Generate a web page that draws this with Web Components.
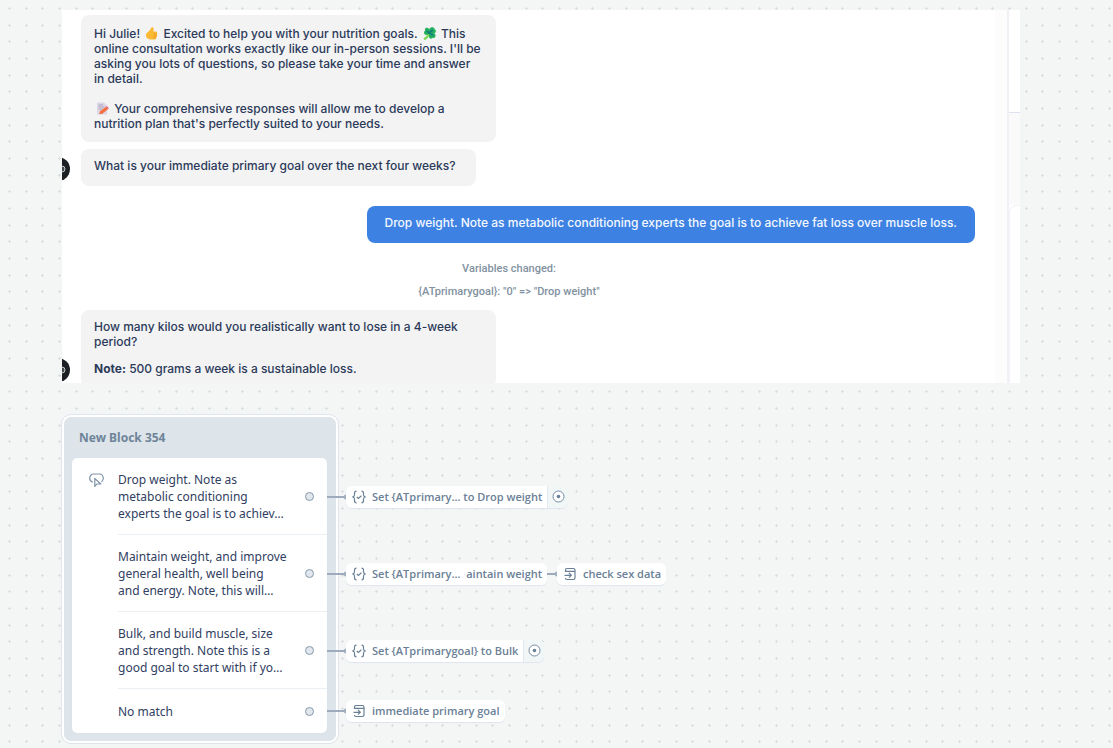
<!DOCTYPE html>
<html lang="en">
<head>
<meta charset="utf-8">
<title>Conversation canvas</title>
<style>
  body { margin: 0; min-height: 100vh; }
</style>
</head>
<body>
<flow-canvas>
  <chat-panel>
    <chat-message>
      <p>Hi Julie! <chat-emoji name="thumb"></chat-emoji> Excited to help you with your nutrition goals. <chat-emoji name="clover"></chat-emoji> This<br>online consultation works exactly like our in-person sessions. I'll be<br>asking you lots of questions, so please take your time and answer<br>in detail.</p>
      <p class="next"><chat-emoji name="memo"></chat-emoji> Your comprehensive responses will allow me to develop a<br>nutrition plan that's perfectly suited to your needs.</p>
    </chat-message>
    <chat-message avatar compact>
      <p>What is your immediate primary goal over the next four weeks?</p>
    </chat-message>
    <chat-message reply compact>
      <p>Drop weight. Note as metabolic conditioning experts the goal is to achieve fat loss over muscle loss.</p>
    </chat-message>
    <chat-log>
      <span>Variables changed:</span>
      <span>{ATprimarygoal}: "0" =&gt; "Drop weight"</span>
    </chat-log>
    <chat-message avatar wide>
      <p>How many kilos would you realistically want to lose in a 4-week<br>period?</p>
      <p class="note"><b>Note:</b> 500 grams a week is a sustainable loss.</p>
    </chat-message>
  </chat-panel>

  <flow-group>
    <flow-block slot="block" name="New Block 354">
      <flow-option icon>Drop weight. Note as<br>metabolic conditioning<br>experts the goal is to achiev…</flow-option>
      <flow-option>Maintain weight, and improve<br>general health, well being<br>and energy. Note, this will…</flow-option>
      <flow-option>Bulk, and build muscle, size<br>and strength. Note this is a<br>good goal to start with if yo…</flow-option>
      <flow-option short>No match</flow-option>
    </flow-block>
    <flow-path><flow-chip icon="set" target>Set {ATprimary… to Drop weight</flow-chip></flow-path>
    <flow-path><flow-chip icon="set">Set {ATprimary…&nbsp; aintain weight</flow-chip><flow-chip icon="jump" linked>check sex data</flow-chip></flow-path>
    <flow-path><flow-chip icon="set" target>Set {ATprimarygoal} to Bulk</flow-chip></flow-path>
    <flow-path short><flow-chip icon="jump">immediate primary goal</flow-chip></flow-path>
  </flow-group>
</flow-canvas>

<script>
const define = (name, html, setup) => {
  const template = document.createElement('template');
  template.innerHTML = html;
  customElements.define(name, class extends HTMLElement {
    constructor() {
      super();
      this.attachShadow({ mode: 'open' }).append(template.content.cloneNode(true));
    }
    connectedCallback() { if (setup) setup(this, this.shadowRoot); }
  });
};

/* Canvas: the grid marks repeat three times in each 50px tile. */
const mark = (x, y) => `M${x - 1.5} ${y}h3M${x} ${y - 1.5}v3`;
const marks = [9.5, 26.5, 42.5].flatMap(x => [8.5, 25.5, 41.5].map(y => mark(x, y))).join('');
const tile = encodeURIComponent(`<svg xmlns="http://www.w3.org/2000/svg" width="50" height="50"><path d="${marks}" stroke="#dae0e0" fill="none"/></svg>`);

define('flow-canvas', `
<style>
  :host {
    display: flex; flex-direction: column; gap: 32px;
    box-sizing: border-box; min-height: 100vh; padding: 10px 93px 4px 62px;
    overflow: hidden;
    background: #f4f6f6 url("data:image/svg+xml,${tile}");
    font-family: "Open Sans", sans-serif;
  }
</style>
<slot></slot>`);

define('chat-panel', `
<style>
  :host {
    display: grid; grid-template-columns: 1fr 12px 2px 11px;
    max-height: 373px; overflow: hidden; background: #fff;
    font: 500 12px/15px Inter, sans-serif; color: #2b3a5a;
  }
  .thread { display: flex; flex-direction: column; align-items: flex-start; min-width: 0; padding: 5px 20px 0 0; }
  .track { background: #fcfcfd; }
  .rule { background: #f0f0f6; }
  .side { display: grid; grid-template-rows: 102px 1px 92px 1fr; }
  .line { background: #dfe2f0; }
  .band { background: #fafafb; }
  .sheet { border: solid #f3f3f6; border-width: 1px 0 0 1px; border-top-left-radius: 8px; }
</style>
<div class="thread"><slot></slot></div>
<div class="track"></div>
<div class="rule"></div>
<div class="side"><div></div><div class="line"></div><div class="band"></div><div class="sheet"></div></div>`);

define('chat-message', `
<style>
  :host { display: flex; align-items: flex-end; gap: 11px; margin-bottom: 7px; }
  svg { width: 8px; height: 24px; margin-bottom: 5px; flex: none; visibility: hidden; }
  :host([avatar]) svg { visibility: visible; }
  .bubble { box-sizing: border-box; padding: 11px 13px; border-radius: 8px; background: #f3f3f3; white-space: nowrap; }
  :host(:not([compact])) .bubble { width: 415px; }
  :host([wide]) .bubble { padding-top: 9px; }
  :host([compact]) .bubble { padding: 9px 20px 13px 13px; }
  :host([reply]) { align-self: flex-end; margin: 13px 0 14px; color: #f4f8ff; }
  :host([reply]) svg { display: none; }
  :host([reply]) .bubble { padding: 9px 18px 13px; background: #3d82e3; }
  ::slotted(p) { margin: 0; }
  ::slotted(p.next) { margin-top: 15px; }
  ::slotted(p.note) { margin-top: 12px; }
</style>
<svg viewBox="0 0 8 24" aria-hidden="true">
  <circle cx="-4" cy="12" r="12" fill="#1c2025"/>
  <circle cx="0" cy="12" r="3" fill="#45484c" stroke="#c9cbcd"/>
</svg>
<div class="bubble"><slot></slot></div>`);

define('chat-log', `
<style>
  :host { display: flex; flex-direction: column; align-items: center; align-self: stretch;
    margin: 0 19px 7px 0; font: 500 11px/23px Roboto, sans-serif; color: #8292a0; }
</style>
<slot></slot>`);

const emoji = {
  thumb: `<path d="M6.600 .300c1.200-.5 2.300.4 2.100 1.800L8.300 4.600h2.500c1.300 0 1.700 1.400 1 2 .8.5.7 1.600 0 2 .5.600.1 1.600-.5 1.900.2 1-.4 1.800-1.400 1.900-2.100.3-4.700.2-6.300-.5C2 11.400.9 10 1 8.200c0-1.700.9-2.700 2.200-3.500C4.800 3.700 5.600 2.200 6.600.3z" fill="#fbb832"/><path d="M8.500 6.700h2.900M8.400 8.700h3M8.200 10.600h2.500" stroke="#e8912a" stroke-width=".7" fill="none"/>`,
  clover: `<path d="M6 6.500C5 9.500 3.500 11.300 1 12.200" stroke="#7ed957" stroke-width="2.200" fill="none"/><path d="M6.500 6.800C3 9 .8 7.500 1 5.300 1.100 4.300 1.700 3.800 2.200 3.700 1.200 1.500 3 .2 4.800 1.100 5.500 1.400 6 1.700 6.300 2.200 7 .6 8.800 0 10.300.5c1.200.4 1.500 1.300 1.400 2 1.200.4 1.500 1.600.8 2.700-.3.6-.8 1-1.200 1.300 1.500.9 1.600 2.700.7 3.700-.7.8-1.700.8-2.300.5-.8 1.400-2.600 1.300-3.400.1C5.600 9.600 6 7.800 6.500 6.800z" fill="#25b060"/><path d="M3.500 4l6.500 4.500M9.800 3L5 6.500" stroke="#11807a" stroke-width="1.600" fill="none"/>`,
  memo: `<path d="M1 .5h7L11 3.300V12.500H1z" fill="#dcd6e6"/><path d="M2.500 3h4.500M2.500 5h6M2.500 7h4" stroke="#a79bb8" stroke-width=".8"/><path d="M4 9.300L10 4.700l2 2.600-5.700 4.500-3 .5z" fill="#f4703f"/><path d="M10 4.700l1-.7 1.900 2.300-.9 1z" fill="#ef5d74"/>`
};
define('chat-emoji', `
<style>
  :host { display: inline-block; width: 13px; height: 13px; margin: 0 2px; vertical-align: -2px; }
  svg { display: block; width: 13px; height: 13px; }
</style>
<svg viewBox="0 0 13 13" aria-hidden="true"></svg>`,
(host, root) => { root.querySelector('svg').innerHTML = emoji[host.getAttribute('name')]; });

/* The block on the left; one outgoing path beside each option. */
define('flow-group', `
<style>
  :host { display: flex; align-items: flex-start; }
  .paths { display: flex; flex-direction: column; margin-left: -11px; padding-top: 43px; z-index: 1; }
</style>
<slot name="block"></slot>
<div class="paths"><slot></slot></div>`);

define('flow-block', `
<style>
  :host { display: block; flex: none; box-sizing: border-box; width: 276px; padding: 0 9px 8px 8px;
    border: 2px solid #fff; border-radius: 9px; background: #dde4ea; outline: 1px solid #dfe5ec; }
  h2 { margin: 0; padding: 12px 7px 11px; font: 700 12px/18px "Noto Sans", sans-serif; color: #6e8499; }
  .list { border-radius: 5px; background: #fff; box-shadow: 0 0 1px #c9d3dd; }
</style>
<h2></h2>
<div class="list"><slot></slot></div>`,
(host, root) => { root.querySelector('h2').textContent = host.getAttribute('name'); });

define('flow-option', `
<style>
  :host { display: flex; box-sizing: border-box; height: 77px; padding-left: 17px; color: #31405f;
    font: 400 12px/17px "Noto Sans", sans-serif; }
  :host([short]) { height: 44px; }
  .icon { width: 29px; padding-top: 15px; flex: none; }
  .icon svg { display: none; }
  :host([icon]) .icon svg { display: block; }
  .row { flex: 1; display: flex; align-items: center; justify-content: space-between; padding-right: 13px;
    border-bottom: 1px solid #e9eff3; white-space: nowrap; }
  :host([short]) .row { border: 0; }
  .port { box-sizing: border-box; width: 9px; height: 9px; border: 1px solid #8798ab; border-radius: 50%; background: #e1e7ed; flex: none; }
</style>
<div class="icon"><svg width="15" height="15" viewBox="0 0 15 15" fill="none" stroke="#7f92a6" stroke-width="1.200" stroke-linejoin="round" stroke-linecap="round" aria-hidden="true">
  <path d="M3.500 9C1.700 8.500.7 7 .7 5.200.7 3 2.200 1 4.500 1h6c2.300 0 3.800 2 3.800 4.200 0 1.500-.6 2.600-1.600 3.300"/>
  <path d="M5.800 5.500v8l2-2.500h4z"/></svg></div>
<div class="row"><span><slot></slot></span><span class="port"></span></div>`);

define('flow-path', `
<style>
  :host { display: flex; align-items: center; height: 77px; }
  :host([short]) { height: 44px; }
  svg { display: block; flex: none; }
</style>
<svg width="19" height="8" viewBox="0 0 19 8" aria-hidden="true"><path d="M0 4h17" stroke="#9dabbc" stroke-width="2"/><path d="M19 1.500c-3 0-3 5 0 5z" fill="#9dabbc"/></svg>
<slot></slot>`);

const glyph = {
  set: `<path d="M4.500 1.200C2.700 1.200 2.500 2 2.500 3.200v1.600C2.500 6 2 6.600.8 7c1.200.4 1.700 1 1.700 2.200v1.600c0 1.200.2 2 2 2M9.500 1.200c1.800 0 2 .8 2 2v1.600c0 1.200.5 1.800 1.700 2.200-1.200.4-1.700 1-1.700 2.200v1.600c0 1.200-.2 2-2 2M4.800 7l1.600 1.500L9.400 5.700"/>`,
  jump: `<path d="M2.500 5V3.200C2.500 2 3 1.500 4 1.500h6.500c1 0 1.500.5 1.500 1.700v7.600c0 1.200-.5 1.700-1.500 1.700H4C3 12.500 2.500 12 2.500 11M2.500 4.300H12M1.500 8.300H8M6 6l2.300 2.300L6 10.600"/>`
};
define('flow-chip', `
<style>
  :host { display: flex; align-items: center; font: 600 11px/22px "Open Sans", sans-serif; color: #6a8096; white-space: nowrap; }
  .link { display: none; }
  :host([linked]) .link { display: block; flex: none; }
  .box { display: flex; border-radius: 6px; box-shadow: 0 1px 1px #dfe5ee; overflow: hidden; }
  .label { display: flex; align-items: center; gap: 6px; height: 22px; padding: 0 5px 0 6px; background: #fff; }
  .label svg { display: block; flex: none; }
  button { display: none; width: 21px; height: 22px; padding: 0; border: 0; border-left: 1px solid #e3e9f1; background: #f1f6f7; }
  :host([target]) button { display: grid; place-items: center; }
</style>
<svg class="link" width="10" height="8" viewBox="0 0 10 8" aria-hidden="true"><path d="M0 4h8" stroke="#9dabbc" stroke-width="2"/><path d="M10 1.500c-3 0-3 5 0 5z" fill="#9dabbc"/></svg>
<div class="box">
  <div class="label"><svg class="glyph" width="14" height="14" viewBox="0 0 14 14" fill="none" stroke="#6a8096" stroke-width="1.200" aria-hidden="true"></svg><span><slot></slot></span></div>
  <button type="button" aria-label="Open actions"><svg width="13" height="13" viewBox="0 0 13 13" aria-hidden="true"><circle cx="6.500" cy="6.500" r="5.500" fill="#fff" stroke="#7689a0"/><circle cx="6.500" cy="6.500" r="1.800" fill="#6a8096"/></svg></button>
</div>`,
(host, root) => { root.querySelector('.glyph').innerHTML = glyph[host.getAttribute('icon')]; });
</script>
</body>
</html>
